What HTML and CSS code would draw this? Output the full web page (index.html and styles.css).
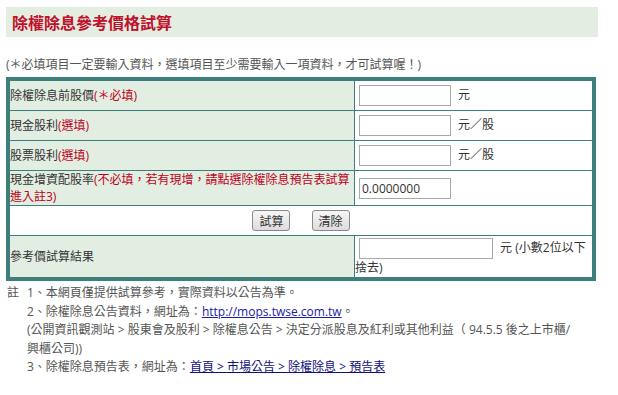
FILE: index.html
```html
<!DOCTYPE html>
<html lang="zh-Hant">
<head>
  <meta charset="UTF-8" />
  <meta name="viewport" content="width=device-width, initial-scale=1.0"/>
  <title>除權除息參考價格試算</title>
  <link rel="stylesheet" href="styles.css">
</head>
<body>
  <div class="page">
    <div class="title-bar">
      <h1>除權除息參考價格試算</h1>
    </div>
    <p class="notice">(＊必填項目一定要輸入資料，選填項目至少需要輸入一項資料，才可試算喔！)</p>

    <form id="calcForm">
      <table class="calc">
        <tr>
          <th class="label">除權除息前股價<span class="req">(＊必填)</span></th>
          <td class="field"><input type="text" class="num" id="price"> 元</td>
        </tr>
        <tr>
          <th class="label">現金股利<span class="req">(選填)</span></th>
          <td class="field"><input type="text" class="num" id="cash"> 元／股</td>
        </tr>
        <tr>
          <th class="label">股票股利<span class="req">(選填)</span></th>
          <td class="field"><input type="text" class="num" id="stock"> 元／股</td>
        </tr>
        <tr>
          <th class="label">現金增資配股率<span class="req">(不必填，若有現增，請點選除權除息預告表試算</span><br><span class="req">進入註3)</span></th>
          <td class="field"><input type="text" class="num" id="rate" value="0.0000000"></td>
        </tr>
        <tr>
          <td class="actions" colspan="2">
            <button type="submit">試算</button>
            <button type="reset">清除</button>
          </td>
        </tr>
        <tr>
          <th class="label">參考價試算結果</th>
          <td class="field result"><input type="text" class="num wide" id="result" readonly> 元 (小數2位以下捨去)</td>
        </tr>
      </table>
    </form>

    <div class="notes">
      <div class="notes-head">註</div>
      <div class="notes-body">
        <div>1、本網頁僅提供試算參考，實際資料以公告為準。</div>
        <div>2、除權除息公告資料，網址為：<a href="#">http://mops.twse.com.tw</a>。</div>
        <div>(公開資訊觀測站 &gt; 股東會及股利 &gt; 除權息公告 &gt; 決定分派股息及紅利或其他利益（ 94.5.5 後之上市櫃/<br>興櫃公司))</div>
        <div>3、除權除息預告表，網址為：<a href="#" class="nav">首頁 &gt; 市場公告 &gt; 除權除息 &gt; 預告表</a></div>
      </div>
    </div>
  </div>

  <script>
    document.getElementById('calcForm').addEventListener('submit', function (event) {
      event.preventDefault();
      const price = +document.getElementById('price').value;
      const cash = +document.getElementById('cash').value || 0;
      const stock = +document.getElementById('stock').value || 0;
      if (!price) return;
      const ref = (price - cash) / (1 + stock / 10);
      document.getElementById('result').value = Math.floor(ref * 100) / 100;
    });
  </script>
</body>
</html>
```

FILE: styles.css
```css
body {
  margin: 0;
  padding: 7px 0 0 6px;
  font-family: "Open Sans", "Noto Sans CJK TC", sans-serif;
  font-size: 12px;
  color: #555;
  background-color: white;
}
.page {
  width: 592px;
}
.title-bar {
  height: 30px;
  padding-left: 6px;
  display: flex;
  align-items: center;
  background-color: #e3ede2;
}
.title-bar h1 {
  margin: 0;
  font-family: "Noto Sans CJK TC", sans-serif;
  font-size: 16px;
  font-weight: bold;
  color: #c0102a;
}
.notice {
  margin: 20px 0 4px;
  line-height: 16px;
}
form {
  margin: 0;
}
.calc {
  width: 590px;
  border: 4px solid #3d7f7c;
  border-spacing: 0;
  color: #333;
}
.calc th,
.calc td {
  padding: 0;
  line-height: 17px;
  border-bottom: 1px solid #3d7f7c;
  vertical-align: middle;
}
.calc tr:last-child th,
.calc tr:last-child td {
  border-bottom: none;
}
.calc .label {
  width: 344px;
  text-align: left;
  font-weight: normal;
  background-color: #e3eee3;
  border-right: 1px solid #3d7f7c;
}
.req {
  color: #c00020;
}
.field {
  padding: 4px 0 !important;
  background-color: white;
}
.num {
  box-sizing: border-box;
  width: 92px;
  height: 21px;
  margin: 0 4px 0 4px;
  padding: 0 2px;
  border: 1px solid #a9a9a9;
  font-family: "Open Sans", sans-serif;
  font-size: 12px;
  color: #333;
  vertical-align: middle;
}
.num.wide {
  width: 134px;
}
.result {
  padding: 2px 0 1px !important;
}
.actions {
  padding: 4px 0 !important;
  text-align: center;
  background-color: white;
}
.actions button {
  width: 38px;
  height: 21px;
  margin: 0 9px;
  padding: 0;
  font-family: "Noto Sans CJK TC", sans-serif;
  font-size: 12px;
  color: #333;
  border: 1px solid #8a8a8a;
  border-radius: 3px;
  background: linear-gradient(#f6f6f6, #dcdcdc);
  cursor: pointer;
}
.notes {
  display: flex;
  margin-top: 3px;
  line-height: 18.5px;
}
.notes-head {
  width: 20px;
  padding-left: 1px;
}
.notes-body {
  flex: 1;
}
.notes a {
  color: #1a1aa8;
}
.notes a.nav {
  color: #10107a;
}
```
